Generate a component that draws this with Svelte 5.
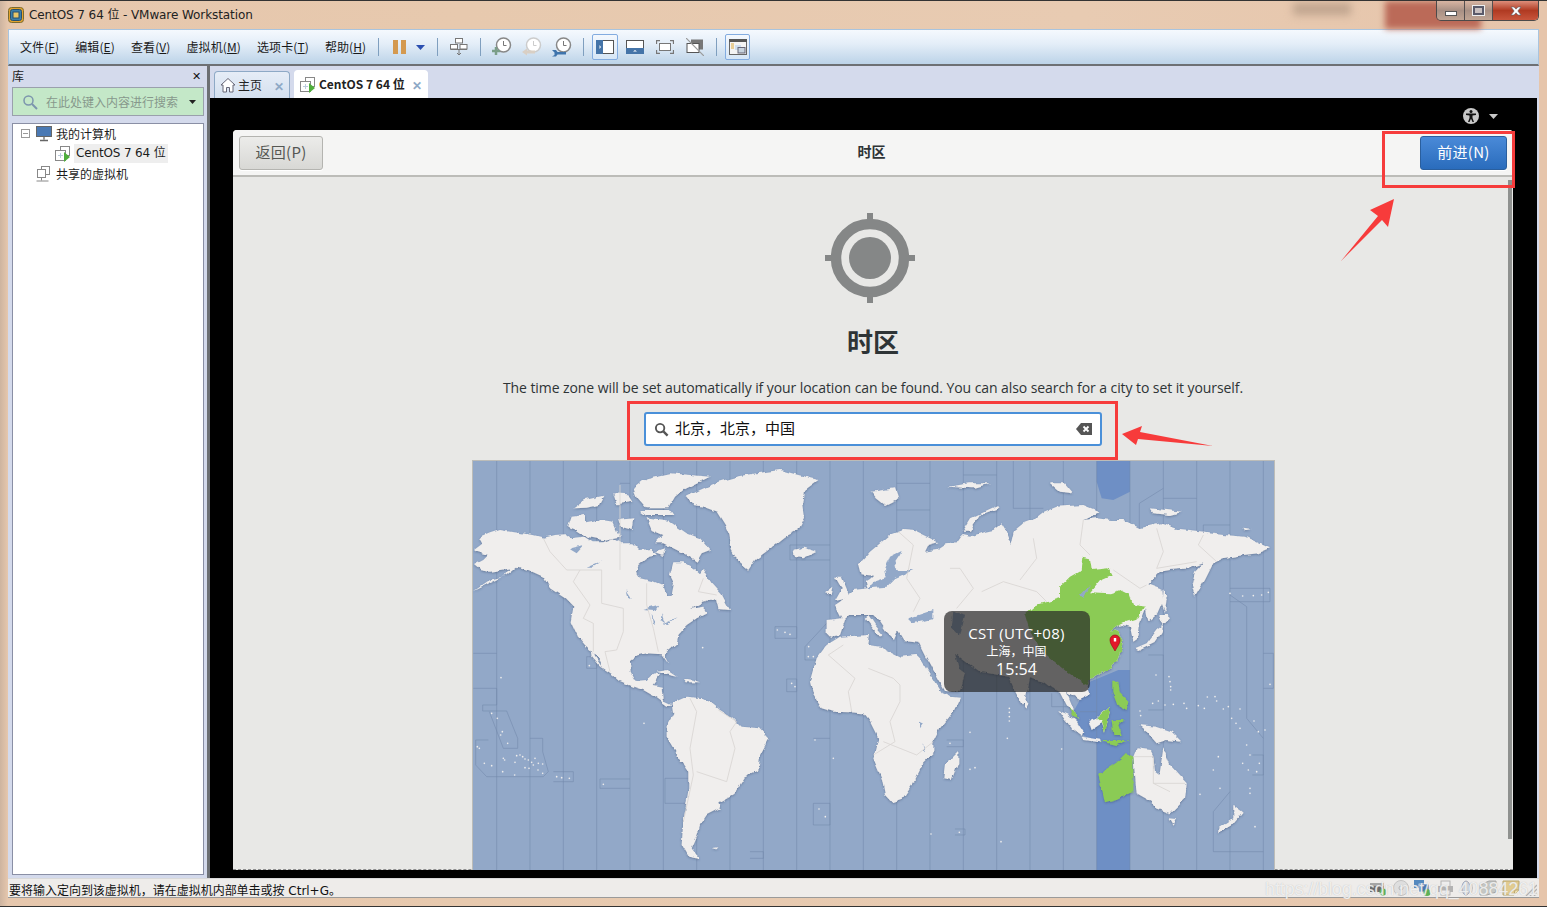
<script>
	const menus = [
		['文件(', 'F', ')'], ['编辑(', 'E', ')'], ['查看(', 'V', ')'],
		['虚拟机(', 'M', ')'], ['选项卡(', 'T', ')'], ['帮助(', 'H', ')']
	];

	const verticals = [80, 180, 280, 380, 480, 580, 680, 780, 880, 980, 1080, 1180];

	const westZones = [
		'10,595 80,595', '10,700 80,700 80,750 38,750 38,768 110,768 143,850 143,880 100,880 58,770',
		'180,850 218,850 218,890 235,950 220,965 50,965 17,930 17,855 55,855', '250,950 310,950 310,980 250,980',
		'390,972 480,972', '390,972 390,1000 480,1000', '585,970 660,970', '585,970 585,1045 650,1045',
		'915,515 980,515 980,550 915,550 915,515', '1005,575 1070,505', '1005,575 1005,615 1040,615',
		'950,672 980,672 980,710 950,710 950,672', '1030,850 1080,850', '1030,1045 1080,1045 1080,1110 1030,1110 1030,1045',
		'840,1190 880,1190 880,1210 840,1210', '960,270 1080,270', '960,270 960,315 1080,315',
		'450,85 480,85', '350,605 380,605 380,640 350,640 350,605'
	];
	const eastZones = [
		'80,85 180,85', '280,60 380,60', '430,18 430,160 520,160', '880,100 808,145 808,230',
		'980,130 880,130', '1080,210 1000,210 1000,260', '1080,400 1200,400 1200,440 1080,440', '1080,420 1130,455 1130,790 1180,850',
		'1030,1070 1080,1010', '1030,1070 1030,1190 1180,1190', '835,600 880,600 880,765 835,765', '1180,595 1210,595 1210,700 1180,700',
		'80,165 180,165', '230,855 280,855 280,875 230,875', '255,1122 285,1122 285,1140 255,1140',
		'545,715 545,755 590,755', '630,770 680,770', '1147,900 1180,900 1180,960 1147,960'
	];

	const westBorders = [
		'220,250 240,290 290,345 330,345 310,380 360,450 340,490 370,505 370,590',
		'330,345 395,345 395,445 460,460 460,530 440,585 405,590 420,650',
		'450,90 450,345', '530,385 530,450 550,520 565,590', '700,370 685,410 740,420', '660,730 680,770 660,880 670,960 640,1100',
		'745,765 800,800 780,830 795,880 770,980 680,950', '1120,570 1075,600 1155,670 1135,710 1145,770'
	];
	const eastBorders = [
		'85,230 130,270 110,370 150,430 130,470', '240,340 270,340 310,400 260,460', '335,410 400,380 500,410 530,440',
		'490,250 500,310 450,375', '640,195 630,270 660,300', '730,345 810,400 830,390', '860,220 880,290 860,340 980,320',
		'-5,640 70,670 90,690 90,740 60,800 75,860 10,900', '40,860 140,900 190,860', '790,905 850,905 850,985 900,1010',
		'850,985 945,985', '1000,240 985,270 1040,320'
	];

	const westDots = [
		[65,775],[82,790],[97,830],[92,840],[113,865],[22,875],[28,880],[100,910],[104,915],[43,925],[65,932],[98,950],[134,960],
		[140,902],[150,900],[158,905],[165,912],[175,915],[185,922],[195,910],[205,925],[218,927],[135,922],[165,938],[177,940],
		[190,930],[204,945],[218,955],[260,965],[275,968],[298,970],[400,988],[358,632],[698,578],[922,525],[945,532],[960,538],
		[1016,575],[1035,855],[1090,910],[1047,1062],[1066,1085],[93,668],[522,805],[1015,605],[1030,605],[965,685],[975,695]
	];
	const eastDots = [
		[300,832],[412,850],[575,882],[300,943],[315,938],[240,865],[183,1137],[268,1132],[393,1160],[1050,1000],[990,1018],[1155,1115],
		[418,760],[418,772],[418,785],[418,798],[858,660],[897,665],[900,680],[902,695],[902,705],[1200,688],
		[810,768],[812,782],[848,745],[865,738],[885,750],[910,748],[942,745],[950,760],[985,752],[1003,760],[1012,726],[1035,725],[1040,738],
		[1060,762],[1075,755],[1110,762],[1085,790],[1098,805],[1110,820],[1152,798],[1165,830],[1185,825],[1130,870],[1140,900],[1118,925],
		[1135,945],[1168,925],[1160,950],[1140,1015],[1140,1000],[1080,415],[1118,423],[1150,422],[1175,420],[1195,412],[1030,945],[1045,905]
	];
</script>

<div class="window">
	<div class="aero-blur"></div>
	<div class="aero-smudge"></div>
	<header class="titlebar">
		<svg class="app-icon" viewBox="0 0 16 16" width="16" height="16">
			<rect x="0.5" y="0.5" width="15" height="15" rx="3" fill="#e4a32c" stroke="#7a6a30"/>
			<rect x="2.5" y="2.5" width="11" height="11" rx="2" fill="#3d7fa8" stroke="#26506e"/>
			<rect x="5" y="5" width="6" height="6" fill="#e9c768" stroke="#26506e"/>
		</svg>
		<span class="title-text">CentOS 7 64 位 - VMware Workstation</span>
		<div class="win-controls">
			<div class="ctl"><span class="min-mark"></span></div>
			<div class="ctl"><span class="max-mark"></span></div>
			<div class="ctl close">
				<svg viewBox="0 0 12 10" width="12" height="10"><path d="M1 1h3l2 2.2L8 1h3L7.8 5 11 9H8L6 6.8 4 9H1l3.2-4z" fill="#fff" stroke="#5a5f68" stroke-width=".6"/></svg>
			</div>
		</div>
	</header>

	<nav class="toolbar">
		{#each menus as m}
			<span class="menu">{m[0]}<u>{m[1]}</u>{m[2]}</span>
		{/each}
		<i class="sep first"></i>
		<div class="pause"><b></b><b></b></div>
		<svg class="drop" viewBox="0 0 9 5" width="9" height="5"><path d="M0 0h9L4.5 5z" fill="#2b4fb0"/></svg>
		<i class="sep drop-sep"></i>
		<div class="tool">
			<svg viewBox="0 0 20 20" width="20" height="20" fill="#fff" stroke="#777">
				<rect x="6.5" y="1.5" width="7" height="4.5"/><rect x="1.5" y="7.5" width="7" height="4.5"/><rect x="11" y="7.5" width="7" height="4.5"/>
				<path d="M1.5 12.500h16.500" fill="none"/><path d="M10 13v5M8 16l2 2 2-2" fill="none"/>
			</svg>
		</div>
		<i class="sep"></i>
		<div class="tool">
			<svg viewBox="0 0 22 22" width="22" height="22">
				<circle cx="12.500" cy="9" r="7" fill="#fff" stroke="#888" stroke-width="1.500"/><path d="M12.500 5v4.500h3" fill="none" stroke="#777"/>
				<path d="M5 11v8M1 15h8" stroke="#7a9e88" stroke-width="2.500"/>
			</svg>
		</div>
		<div class="tool">
			<svg viewBox="0 0 22 22" width="22" height="22">
				<circle cx="12.500" cy="9" r="7" fill="#fff" stroke="#ccc" stroke-width="1.500"/><path d="M12.500 5v4.500h3" fill="none" stroke="#ccc"/>
				<path d="M1 16l5-3.500v2h8v3H6v2z" fill="#d9cfc4"/>
			</svg>
		</div>
		<div class="tool">
			<svg viewBox="0 0 22 22" width="22" height="22">
				<circle cx="12.500" cy="9" r="7" fill="#fff" stroke="#888" stroke-width="1.500"/><path d="M12.500 5v4.500h3" fill="none" stroke="#777"/>
				<path d="M1 14h4l1.500 2H15v2.500H6.500L5 20.500H1l2.500-1.500v-2.500z" fill="#3f74ac"/>
			</svg>
		</div>
		<i class="sep"></i>
		<div class="tool on">
			<svg viewBox="0 0 18 14" width="18" height="14"><rect x=".5" y=".5" width="17" height="13" fill="#fff" stroke="#555"/><rect x="0" y="0" width="7" height="14" fill="#4574a8"/><path d="M3.500 5l1.500 2-1.500 2z" fill="#fff"/></svg>
		</div>
		<div class="tool">
			<svg viewBox="0 0 18 14" width="18" height="14"><rect x=".5" y=".5" width="17" height="13" fill="#fff" stroke="#555"/><rect x="0" y="8" width="18" height="6" fill="#4574a8"/><path d="M7 11.500l2-1.500 2 1.500z" fill="#fff"/></svg>
		</div>
		<div class="tool">
			<svg viewBox="0 0 18 14" width="18" height="14" fill="none" stroke="#777"><rect x="3.500" y="3.500" width="11" height="7" fill="#fff"/><path d="M.5 4V.5H4M14 .5h3.500V4M17.500 10v3.500H14M4 13.500H.5V10" stroke-width="1.300"/></svg>
		</div>
		<div class="tool">
			<svg viewBox="0 0 18 18" width="18" height="18"><rect x="5" y="1.500" width="12" height="10" fill="#777"/><rect x="1" y="5.500" width="12" height="9" fill="#fff" stroke="#555"/><path d="M0 0l18 18" stroke="#999" stroke-width="1.200"/></svg>
		</div>
		<i class="sep"></i>
		<div class="tool on narrow">
			<svg viewBox="0 0 18 16" width="18" height="16"><rect x=".5" y=".5" width="17" height="15" fill="#f4f4f4" stroke="#666"/><rect x="0" y="0" width="18" height="3" fill="#555"/><path d="M2 5h3M2 7h3M2 9h3" stroke="#dca93a"/><rect x="6" y="6" width="6" height="5" fill="#cfdff0"/><rect x="9" y="8.500" width="7" height="5.500" fill="#c8d4df" stroke="#667"/></svg>
		</div>
	</nav>

	<div class="main">
		<aside class="library">
			<div class="lib-head"><span>库</span><span class="lib-x">✕</span></div>
			<div class="lib-search">
				<svg viewBox="0 0 16 16" width="16" height="16" fill="none" stroke="#7c95ad"><circle cx="6.500" cy="6.500" r="4.500" stroke-width="1.500"/><path d="M10 10l5 5" stroke-width="2"/></svg>
				<span class="lib-hint">在此处键入内容进行搜索</span>
				<svg class="lib-arrow" viewBox="0 0 7 4" width="7" height="4"><path d="M0 0h7L3.500 4z" fill="#222"/></svg>
			</div>
			<div class="tree">
				<div class="tree-row">
					<span class="expander"></span>
					<svg viewBox="0 0 16 16" width="16" height="16"><rect x=".5" y=".5" width="15" height="10" fill="#4a79b4" stroke="#666"/><path d="M8 11v2.500M4 14.500h8" stroke="#666" stroke-width="1.300"/></svg>
					<span>我的计算机</span>
				</div>
				<div class="tree-row vm">
					<svg viewBox="0 0 16 16" width="16" height="16"><rect x="5.500" y=".5" width="9" height="9" fill="#fff" stroke="#888"/><rect x=".5" y="4.500" width="10" height="10" fill="#fff" stroke="#888"/><path d="M5.500 7v5M3 9.500h5" stroke="#bcd"/><path d="M9 6l6 5-6 5z" fill="#4fae3c"/></svg>
					<span class="vm-name">CentOS 7 64 位</span>
				</div>
				<div class="tree-row shared">
					<svg viewBox="0 0 16 16" width="16" height="16" fill="#fff" stroke="#888"><rect x="5.500" y=".5" width="8" height="8"/><rect x="1.500" y="3.500" width="8" height="8"/><path d="M5.500 11.500v3M.5 15h12" fill="none"/></svg>
					<span>共享的虚拟机</span>
				</div>
			</div>
		</aside>

		<section class="right">
			<div class="tabs">
				<div class="tab">
					<svg viewBox="0 0 16 16" width="16" height="16" fill="#fff" stroke="#667"><path d="M1 8l7-6.500L15 8h-2v7H9.500v-4.500h-3V15H3V8z"/></svg>
					<span class="tab-label">主页</span>
					<span class="tab-x">✕</span>
				</div>
				<div class="tab active">
					<svg viewBox="0 0 16 16" width="16" height="16"><rect x="5.500" y=".5" width="9" height="9" fill="#fff" stroke="#888"/><rect x=".5" y="4.500" width="10" height="10" fill="#fff" stroke="#888"/><path d="M5.500 7v5M3 9.500h5" stroke="#bcd"/><path d="M9 6l6 5-6 5z" fill="#4fae3c"/></svg>
					<span class="tab-label">CentOS 7 64 位</span>
					<span class="tab-x">✕</span>
				</div>
			</div>

			<div class="console">
				<div class="a11y">
					<svg viewBox="0 0 16 16" width="16" height="16"><circle cx="8" cy="8" r="8" fill="#c8c8c8"/><circle cx="8" cy="3.600" r="1.500" fill="#111"/><path d="M3 5.500h10v1.400l-3.500.6v2.500l1.500 4h-1.500L8 10.800 6.500 14H5l1.500-4V7.500L3 6.900z" fill="#111"/></svg>
					<svg class="a11y-arrow" viewBox="0 0 9 5" width="9" height="5"><path d="M0 0h9L4.500 5z" fill="#c8c8c8"/></svg>
				</div>
				<div class="installer">
					<div class="inst-head">
						<button class="btn">返回(P)</button>
						<h2>时区</h2>
						<button class="btn primary">前进(N)</button>
					</div>
					<div class="inst-body">
						<svg class="target" viewBox="0 0 90 90" width="90" height="90">
							<circle cx="45" cy="45" r="34" fill="none" stroke="#858787" stroke-width="10.500"/>
							<circle cx="45" cy="45" r="21" fill="#858787"/>
							<path d="M45 0v10M45 80v10M0 45h10M80 45h10" stroke="#858787" stroke-width="6"/>
						</svg>
						<h1>时区</h1>
						<p class="desc">The time zone will be set automatically if your location can be found. You can also search for a city to set it yourself.</p>
						<div class="entry">
							<svg viewBox="0 0 16 16" width="15" height="15" fill="none" stroke="#555"><circle cx="6.500" cy="6.500" r="4.500" stroke-width="2"/><path d="M10 10l4.500 4.500" stroke-width="2.500"/></svg>
							<span class="entry-text">北京，北京，中国</span>
							<svg class="entry-clear" viewBox="0 0 16 12" width="16" height="12"><path d="M5 0h11v12H5L0 6z" fill="#555"/><path d="M7.500 3.500l5 5M12.500 3.500l-5 5" stroke="#fff" stroke-width="1.800"/></svg>
						</div>
						<div class="map">
							<svg viewBox="473 461 801 409" width="801" height="409">
								<defs>
									<filter id="coast" x="-2%" y="-2%" width="104%" height="104%">
										<feTurbulence type="fractalNoise" baseFrequency=".11" numOctaves="3" seed="4" result="noise"/>
										<feDisplacementMap in="SourceGraphic" in2="noise" scale="5" xChannelSelector="R" yChannelSelector="G" result="rough"/>
										<feDropShadow in="rough" dx="0" dy="1" stdDeviation="1.300" flood-color="#324669" flood-opacity=".45"/>
									</filter>
								</defs>
								<rect x="473" y="461" width="801" height="409" fill="#92a8c8"/>

								<g transform="translate(870 455) scale(.33333)">
									<path d="M680 18h100v92l-50 25-35-5-15-50z" fill="#6e8fc5"/>
									<path d="M660 680l85-35h35v600H680V865l-40-25-30-70z" fill="#6e8fc5"/>
								</g>

								<g fill="none" stroke="#7287aa" stroke-opacity=".55" stroke-width="3">
									<g transform="translate(470 455) scale(.33333)">
										{#each verticals as x}
											<path d="M{x} 18V1245"/>
										{/each}
										{#each westZones as pts}
											<polyline points={pts}/>
										{/each}
									</g>
									<g transform="translate(870 455) scale(.33333)">
										{#each verticals as x}
											<path d="M{x} 18V1245"/>
										{/each}
										{#each eastZones as pts}
											<polyline points={pts}/>
										{/each}
									</g>
								</g>

								<g filter="url(#coast)">
									<g fill="#f0eeed" transform="translate(470 455) scale(.33333)">
										<!-- north america -->
										<path d="M12 285L35 268 25 250 60 235 90 225 130 232 190 240 222 248 255 240 285 238 300 250 340 245 365 262 400 262 430 250 455 265 490 265 510 285 545 282 560 300 535 305 505 330 498 350 510 370 545 378 580 393 590 420 605 420 612 385 600 360 610 322 640 322 670 340 690 358 700 345 725 385 755 418 780 465 745 462 738 430 700 440 660 462 700 455 710 475 680 490 650 510 625 540 620 565 590 590 585 605 596 628 575 598 530 595 500 602 480 618 482 650 497 678 530 675 545 660 555 655 570 660 548 690 575 695 578 735 605 748 592 752 555 725 520 705 490 695 450 678 430 660 400 640 385 610 362 585 345 570 320 540 302 500 310 455 285 430 240 400 220 365 175 345 140 335 110 360 60 385 12 408 60 375 100 365 120 340 60 350 30 345 12 330 40 315 55 300 20 290z"/>
										<path d="M362 585L378 610 402 645 385 630 365 605z"/>
										<!-- greenland, iceland -->
										<path d="M650 125L690 105 745 80 800 65 860 55 930 45 985 60 1045 75 1005 105 1000 150 1005 185 985 225 945 245 895 285 855 315 835 345 805 320 785 285 778 240 765 210 740 170 700 155 670 150z"/>
										<path d="M970 285L1000 278 1040 290 1000 310 975 305z"/>
										<!-- south america -->
										<path d="M605 745L650 725 700 730 725 745 750 765 790 790 815 815 870 820 897 850 870 900 865 945 825 965 790 1020 745 1045 750 1060 710 1080 690 1110 680 1145 665 1180 690 1212 655 1205 635 1170 640 1100 655 1010 655 950 625 905 590 845 590 815 610 780z"/>
										<!-- arctic islands -->
										<path d="M530 190L560 195 600 200 650 235 690 250 720 285 695 295 680 320 650 300 610 280 580 265 555 265 580 240 545 225z"/>
										<path d="M490 100L530 70 600 55 720 65 680 85 640 105 615 125 595 160 530 160 500 125z"/>
										<path d="M295 215L305 185 345 180 345 205 395 195 430 200 450 245 400 255 350 245 320 225z"/>
										<path d="M310 160L345 135 400 122 385 150 350 158z"/>
										<path d="M430 115L475 118 490 140 440 148z"/>
										<path d="M510 165L600 165 610 180 530 180z"/>
										<path d="M445 195L490 190 485 225 450 215z"/>
										<path d="M555 290L585 280 580 300z"/>
										<!-- caribbean -->
										<path d="M560 650L590 645 620 665 595 660zM640 670L670 675 690 682 650 682z"/>
										<!-- britain -->
										<path d="M1065 415L1090 395 1085 420zM1095 365L1115 365 1140 425 1095 435 1115 400z"/>
										<path d="M728 1182L745 1180 740 1186z"/>
									</g>
									<g fill="#f0eeed" transform="translate(870 455) scale(.33333)">
										<!-- eurasia -->
										<path d="M-130 495L-85 490 -105 450 -90 440 -50 405 -5 400 -10 378 0 372 10 362 -28 358 -35 330 0 290 60 240 100 225 135 228 205 262 175 270 165 290 200 285 230 265 260 262 275 240 300 245 340 232 370 225 395 205 410 230 425 270 435 225 460 205 500 190 525 170 560 155 640 150 690 170 640 195 680 190 720 195 760 195 810 220 870 205 930 225 990 232 1060 240 1125 245 1200 280 1165 295 1120 300 1060 310 1030 325 1005 375 975 425 965 390 975 350 1000 325 960 340 900 345 870 350 835 385 875 400 880 440 865 475 835 500 828 460 810 505 805 550 790 560 780 515 760 510 740 515 720 530 745 525 755 560 748 600 725 640 680 660 655 675 650 695 660 720 630 735 590 710 610 760 625 795 590 750 570 710 545 700 520 680 480 670 465 740 455 745 430 700 415 665 330 650 295 625 255 595 265 640 285 655 270 710 225 708 165 600 145 560 100 555 85 530 75 555 50 530 30 500 10 480 -5 480 -30 480 -60 480 -75 495 -90 540 -120 545 -130 535z"/>
										<path d="M-5 480L15 510 40 540 30 545 5 515 -15 490z"/>
										<!-- africa -->
										<path d="M-180 680L-160 610 -130 570 -90 545 0 540 -5 570 30 575 90 605 140 600 150 610 215 715 240 725 270 728 250 770 210 820 190 860 190 895 160 925 130 985 100 1030 65 1042 45 1020 35 970 10 910 25 850 0 800 -20 775 -60 772 -110 770 -145 760 -170 720z"/>
										<!-- oceania -->
										<path d="M790 905L800 880 840 885 850 905 855 950 868 960 880 880 900 930 950 985 945 1030 900 1075 860 1060 845 1040 800 1015z"/>
										<path d="M895 1090L918 1092 908 1112z"/>
										<path d="M1090 1050L1118 1070 1085 1110 1045 1135 1045 1120 1090 1090z"/>
										<path d="M805 810L860 815 905 830 935 860 890 855 860 865 830 830z"/>
										<!-- japan, sakhalin, madagascar -->
										<path d="M795 580L830 565 860 525 880 510 868 480 890 480 900 490 880 510 875 530 855 560 805 585z"/>
										<path d="M878 400L890 430 885 475 876 450z"/>
										<path d="M220 970L225 930 265 890 265 920 245 975z"/>
										<path d="M462 735L475 745 468 762 462 755z"/>
										<!-- indonesia -->
										<path d="M565 765L590 775 620 800 640 830 635 842 610 825 585 795z"/>
										<path d="M635 845L695 855 690 862 640 855z"/>
										<path d="M655 795L680 790 720 755 720 770 705 830 695 805 665 825z"/>
										<!-- arctic -->
										<path d="M5 110L75 100 85 130 45 150 20 130z"/>
										<path d="M275 230L300 190 385 150 388 158 330 180 300 230z"/>
										<path d="M235 95L300 85 360 85 310 100zM540 85L585 85 610 115 570 110zM840 160L935 170 900 180 850 175z"/>
										<path d="M1120 218L1145 222 1125 226z"/>
										<!-- china and neighbours in the selected zone -->
										<path d="M640 305L660 310 665 345 715 340 725 360 690 375 660 412 720 415 750 405 780 420 790 450 825 455 805 490 770 500 740 515 720 530 745 525 755 560 748 600 725 640 680 660 655 675 650 690 590 650 530 600 480 530 465 480 500 450 570 430 570 395 600 365 635 345z" fill="#8bcb54"/>
										<path d="M730 680L745 680 750 715 775 740 770 765 745 750 730 710zM598 760L615 768 625 795 610 785zM682 790L720 755 720 770 705 830 695 800zM725 795L765 795 745 810 755 840 730 840zM690 858L780 858 740 870z" fill="#8bcb54"/>
										<path d="M690 955L750 915 770 895 790 905 790 1015 770 1020 740 1035 705 1045 695 1000 685 960z" fill="#8bcb54"/>
									</g>
									<g fill="#92a8c8" transform="translate(470 455) scale(.33333)">
										<path d="M300 280L340 270 320 292zM350 335L400 315 365 335zM470 405L488 432 476 430zM520 465L565 452 555 468zM545 475L555 510 548 505zM575 478L585 505 572 495zM578 508L620 490 590 510z"/>
									</g>
									<g fill="#92a8c8" transform="translate(870 455) scale(.33333)">
										<path d="M115 490L190 465 190 490 130 505zM250 470L285 480 270 545 245 520z"/>
										<path d="M95 288L60 305 45 345 50 370 5 385 -5 400 50 395 75 370 130 345 85 345 70 330 90 300z"/>
										<path d="M150 800L160 805 150 820zM158 860L165 895 160 890z"/>
										<path d="M630 422L660 390 642 425z"/>
									</g>
								</g>

								<g fill="none" stroke="#d8d5d3" stroke-width="2.500">
									<g transform="translate(470 455) scale(.33333)">
										{#each westBorders as pts}
											<polyline points={pts}/>
										{/each}
									</g>
									<g transform="translate(870 455) scale(.33333)">
										{#each eastBorders as pts}
											<polyline points={pts}/>
										{/each}
									</g>
								</g>

								<g fill="#f0eeed">
									<g transform="translate(470 455) scale(.33333)">
										{#each westDots as d}
											<circle cx={d[0]} cy={d[1]} r="2.500"/>
										{/each}
									</g>
									<g transform="translate(870 455) scale(.33333)">
										{#each eastDots as d}
											<circle cx={d[0]} cy={d[1]} r="2.500"/>
										{/each}
									</g>
								</g>

								<g transform="translate(1115 643)">
									<path d="M0 8C-2 4-5 1-5-3a5 5 0 0 1 10 0C5 1 2 4 0 8z" fill="#e3182a" stroke="#9e1018" stroke-width=".7"/>
									<rect x="-1.200" y="-5" width="2.400" height="3.500" fill="#fff"/>
								</g>
							</svg>
							<div class="tip">
								<div class="tip-zone">CST (UTC+08)</div>
								<div class="tip-city">上海，中国</div>
								<div class="tip-time">15:54</div>
							</div>
						</div>
						<div class="scrollbar"></div>
					</div>
				</div>
			</div>
		</section>
	</div>

	<footer class="status">
		<span class="status-text">要将输入定向到该虚拟机，请在虚拟机内部单击或按 Ctrl+G。</span>
		<div class="status-icons">
			<svg viewBox="0 0 18 16" width="18" height="16"><rect x="0" y="3" width="14" height="9" fill="#555"/><rect x="0" y="3" width="14" height="3" fill="#999"/><circle cx="13" cy="12" r="3.500" fill="#45a83a"/></svg>
			<svg viewBox="0 0 16 16" width="16" height="16"><circle cx="8" cy="8" r="7.500" fill="#dcdcdc" stroke="#bbb"/><circle cx="8" cy="8" r="2" fill="#f4f4f4" stroke="#aaa"/></svg>
			<svg viewBox="0 0 18 16" width="18" height="16"><rect x="0" y="0" width="10" height="8" fill="#3a78b8"/><rect x="5" y="4" width="10" height="8" fill="#2a62a8" stroke="#fff" stroke-width=".7"/><circle cx="13" cy="12.500" r="3.500" fill="#45a83a"/></svg>
			<svg viewBox="0 0 18 16" width="18" height="16"><rect x="4" y="1" width="9" height="6" fill="#eee" stroke="#aaa"/><rect x="1" y="6" width="15" height="6" fill="#aaa"/><rect x="4" y="10" width="9" height="5" fill="#eee" stroke="#aaa"/></svg>
			<svg viewBox="0 0 14 16" width="14" height="16"><ellipse cx="6" cy="8" rx="4" ry="7" fill="#c9d2dc" stroke="#99a"/><path d="M11 3c2 3 2 7 0 10" fill="none" stroke="#bbb"/></svg>
			<svg viewBox="0 0 18 16" width="18" height="16"><path d="M1 5l9-4h7v11l-9 3H1z" fill="#bfc1bd" stroke="#999"/></svg>
			<svg viewBox="0 0 18 16" width="18" height="16"><path d="M1 1h16v9l-5 5H1z" fill="#e0c780" stroke="#b09a58"/><path d="M12 15l1-5 4 0" fill="#f3e3ac" stroke="#b09a58"/></svg>
			<svg class="grip" viewBox="0 0 12 12" width="12" height="12"><path d="M12 1L1 12M12 5l-7 7M12 9l-3 3" stroke="#a9a9a9" stroke-width="1.300"/></svg>
		</div>
		<span class="watermark">https://blog.csdn.net/qq_40884261</span>
	</footer>

	<div class="mark mark-next"></div>
	<div class="mark mark-entry"></div>
	<svg class="arrows" viewBox="0 0 1547 907" width="1547" height="907">
		<path d="M1341 260L1378 215 1370 209 1394 198 1388 226 1382 219z" fill="#f73b3b"/>
		<path d="M1122 433L1142 425 1140 431 1213 445 1138 438 1136 444z" fill="#f73b3b"/>
	</svg>
</div>

<style>
	:global(body) {
		margin: 0;
		background: #e7c9ae;
	}
	.window {
		position: relative;
		width: 1547px;
		height: 907px;
		box-sizing: border-box;
		padding: 0 8px 8px;
		display: flex;
		flex-direction: column;
		overflow: hidden;
		font-family: "Noto Sans CJK SC", "Noto Sans", sans-serif;
		font-size: 12px;
		color: #1c1c1c;
		background: linear-gradient(90deg, #cdb4a0 0, #e6c7ad 8px, #e7c9ae 30%, #e8cbb2 70%, #e6c5ab 100%);
		border-top: 1px solid #333;
		border-bottom: 1px solid #333;
	}
	.aero-blur {
		position: absolute;
		left: 1385px;
		top: 0;
		width: 96px;
		height: 28px;
		background: #bb6a58;
		filter: blur(3px);
	}
	.aero-smudge {
		position: absolute;
		left: 1293px;
		top: 2px;
		width: 58px;
		height: 12px;
		background: #bfa48e;
		filter: blur(4px);
	}
	.titlebar {
		position: relative;
		height: 28px;
		display: flex;
		align-items: center;
		flex: none;
	}
	.app-icon {
		flex: none;
		margin-top: -1px;
	}
	.title-text {
		margin-left: 5px;
		margin-top: -3px;
		font-family: "DejaVu Sans", "Noto Sans CJK SC", sans-serif;
		font-size: 12px;
		letter-spacing: -.09px;
		color: #222;
		white-space: nowrap;
	}
	.win-controls {
		margin-left: auto;
		align-self: flex-start;
		display: flex;
		height: 19px;
		border: 1px solid #4c4a4a;
		border-top: 0;
		border-radius: 0 0 5px 5px;
		overflow: hidden;
	}
	.ctl {
		width: 27px;
		display: flex;
		align-items: center;
		justify-content: center;
		background: linear-gradient(#d9b5a2, #a89084 50%, #c0a594);
		border-right: 1px solid #554f4f;
	}
	.ctl.close {
		width: 45px;
		border-right: 0;
		background: linear-gradient(#dd8e7a, #b03a22 50%, #c8553c);
	}
	.min-mark {
		width: 10px;
		height: 3px;
		margin-top: 6px;
		background: #fff;
		border: 1px solid #555;
	}
	.max-mark {
		width: 7px;
		height: 5px;
		border: 2px solid #5a5a6a;
		outline: 1px solid #eee;
		background: #c9c0c0;
	}
	.toolbar {
		height: 37px;
		flex: none;
		box-sizing: border-box;
		display: flex;
		align-items: center;
		padding: 0 0 0 11px;
		border: 1px solid #a9c4de;
		border-bottom: 2px solid #6d7074;
		background: linear-gradient(#f5f9fe, #e4eef8 40%, #bcd3e8);
	}
	.menu {
		margin-right: 16px;
		padding-bottom: 2px;
		white-space: nowrap;
		color: #1a1a1a;
		letter-spacing: .1px;
	}
	.sep {
		display: block;
		width: 1px;
		height: 18px;
		background: #7f9fbf;
	}
	.sep.first {
		margin-left: -4px;
		margin-right: 14px;
	}
	.sep.drop-sep {
		margin: 0 6px 0 12px;
	}
	.pause {
		display: flex;
		gap: 3px;
		height: 14px;
	}
	.pause b {
		display: block;
		width: 5px;
		background: #d4994f;
	}
	.drop {
		margin-left: 10px;
	}
	.tool {
		width: 30px;
		height: 26px;
		flex: none;
		display: flex;
		align-items: center;
		justify-content: center;
	}
	.tool + .sep {
		margin: 0 6px;
	}
	.tool.on {
		box-sizing: border-box;
		width: 26px;
		margin: 0 2px;
		background: linear-gradient(#f4f8fd, #d6e6f6);
		border: 1px solid #83ace0;
		border-radius: 2px;
	}
	.tool.narrow {
		width: 25px;
	}
	.main {
		flex: 1;
		min-height: 0;
		display: flex;
		background: #f2f0ee;
	}
	.library {
		width: 199px;
		flex: none;
		box-sizing: border-box;
		display: flex;
		flex-direction: column;
		padding: 0 3px 3px 4px;
		background: #d4daec;
	}
	.lib-head {
		height: 21px;
		box-sizing: border-box;
		display: flex;
		align-items: center;
		justify-content: space-between;
		padding: 0 3px 3px 0;
		color: #222;
	}
	.lib-x {
		font-size: 11px;
		color: #111;
	}
	.lib-search {
		height: 29px;
		box-sizing: border-box;
		flex: none;
		display: flex;
		align-items: center;
		padding: 0 7px 0 9px;
		background: #c4e8c8;
		border: 1px solid #9aa0ac;
	}
	.lib-hint {
		margin-left: 8px;
		padding-bottom: 1px;
		color: #87988c;
	}
	.lib-arrow {
		margin-left: auto;
	}
	.tree {
		margin-top: 7px;
		flex: 1;
		background: #fff;
		border: 1px solid #8a8fa5;
	}
	.tree-row {
		height: 20px;
		box-sizing: border-box;
		display: flex;
		align-items: center;
		gap: 4px;
		padding-left: 8px;
		padding-bottom: 1px;
	}
	.expander {
		box-sizing: border-box;
		width: 9px;
		height: 9px;
		margin-right: 2px;
		border: 1px solid #999;
		background: linear-gradient(#999, #999) center / 5px 1px no-repeat;
	}
	.tree-row.vm {
		padding-left: 42px;
		gap: 3px;
	}
	.vm-name {
		font-family: "DejaVu Sans", "Noto Sans CJK SC", sans-serif;
		letter-spacing: -.15px;
		background: #eeeeee;
		padding: 0 2px;
		line-height: 19px;
	}
	.tree-row.shared {
		padding-left: 23px;
	}
	.right {
		flex: 1;
		min-width: 0;
		display: flex;
		flex-direction: column;
		background: #d4daec;
	}
	.tabs {
		height: 32px;
		flex: none;
		display: flex;
		align-items: flex-end;
		gap: 4px;
		padding-left: 4px;
		border-left: 3px solid #6c6f73;
	}
	.tab {
		width: 76px;
		height: 27px;
		box-sizing: border-box;
		display: flex;
		align-items: center;
		gap: 2px;
		padding: 0 5px;
		background: linear-gradient(#e6edf7, #d4e0ef);
		border: 1px solid #8ea9c6;
		border-bottom: 0;
		border-radius: 4px 4px 0 0;
		color: #222;
	}
	.tab-label {
		padding-bottom: 2px;
	}
	.tab.active {
		width: 134px;
		height: 28px;
		background: #fff;
		font-weight: 700;
		font-size: 12px;
		border-color: #fff;
		gap: 3px;
	}
	.tab-x {
		margin-left: auto;
		font-size: 12px;
		font-weight: 700;
		color: #8ea9c6;
	}
	.console {
		flex: 1;
		min-height: 0;
		box-sizing: border-box;
		display: flex;
		flex-direction: column;
		background: #000;
		padding: 0 24px 8px 23px;
		border-left: 0;
		margin: 0 2px 0 3px;
		box-shadow: -3px 0 0 #6c6f73;
	}
	.a11y {
		height: 32px;
		flex: none;
		display: flex;
		align-items: center;
		justify-content: flex-end;
		gap: 10px;
		padding-right: 15px;
		margin-top: 2px;
		margin-bottom: -2px;
	}
	.installer {
		flex: 1;
		min-height: 0;
		display: flex;
		flex-direction: column;
		border-radius: 4px 4px 0 0;
		overflow: hidden;
		background: #e8e8e6;
		font-family: "Open Sans", "Noto Sans CJK SC", sans-serif;
	}
	.inst-head {
		height: 47px;
		flex: none;
		box-sizing: border-box;
		display: flex;
		align-items: center;
		justify-content: space-between;
		padding: 0 6px;
		background: #f5f5f4;
		border-bottom: 2px solid #bcbcb8;
	}
	.inst-head h2 {
		margin: 0 0 3px;
		font-family: "Noto Sans CJK SC", sans-serif;
		font-size: 14px;
		font-weight: 700;
		color: #2e3436;
	}
	.btn {
		width: 84px;
		height: 34px;
		padding: 0 0 3px;
		font-family: "Noto Sans CJK SC", sans-serif;
		font-size: 15px;
		letter-spacing: .3px;
		color: #555753;
		background: linear-gradient(#ececea, #d8d8d5);
		border: 1px solid #b4b4b0;
		border-radius: 3px;
		box-shadow: 0 1px 0 #fff;
	}
	.btn.primary {
		width: 87px;
		color: #fff;
		background: linear-gradient(#4a8ad8, #2a6cbc);
		border-color: #2a5f9e;
	}
	.inst-body {
		position: relative;
		flex: 1;
		min-height: 0;
		display: flex;
		flex-direction: column;
		align-items: center;
		border-bottom: 1px dashed #8f8f8f;
	}
	.target {
		flex: none;
		margin: 36px 6px 0 0;
	}
	h1 {
		margin: 19px 0 0;
		font-family: "Noto Sans CJK SC", sans-serif;
		font-size: 26px;
		line-height: 38px;
		font-weight: 700;
		color: #2e3436;
	}
	.desc {
		margin: 18px 0 0;
		font-size: 14px;
		line-height: 20px;
		letter-spacing: -.08px;
		color: #2e3436;
		white-space: nowrap;
	}
	.entry {
		margin-top: 14px;
		width: 458px;
		height: 34px;
		flex: none;
		box-sizing: border-box;
		display: flex;
		align-items: center;
		gap: 6px;
		padding: 0 8px;
		background: #fff;
		border: 2px solid #4a90d9;
		border-radius: 3px;
	}
	.entry-text {
		padding-bottom: 4px;
		font-family: "Noto Sans CJK SC", sans-serif;
		font-size: 15px;
		color: #111;
	}
	.entry-clear {
		margin-left: auto;
	}
	.map {
		position: relative;
		margin-top: 15px;
		flex: none;
		line-height: 0;
		outline: 1px solid #bcbcb8;
	}
	.tip {
		position: absolute;
		left: 471px;
		top: 150px;
		width: 146px;
		height: 81px;
		box-sizing: border-box;
		padding-top: 12px;
		border-radius: 8px;
		background: rgba(38, 38, 38, .7);
		color: #fff;
		text-align: center;
		line-height: normal;
	}
	.tip-zone {
		font-size: 15px;
		letter-spacing: .3px;
		line-height: 20px;
	}
	.tip-city {
		font-family: "Noto Sans CJK SC", sans-serif;
		font-size: 12px;
		line-height: 16px;
	}
	.tip-time {
		font-size: 16px;
		line-height: 20px;
	}
	.scrollbar {
		position: absolute;
		right: 1px;
		top: 3px;
		bottom: 30px;
		width: 4px;
		background: #8f918f;
	}
	.status {
		position: relative;
		height: 20px;
		flex: none;
		box-sizing: border-box;
		display: flex;
		align-items: center;
		padding: 0 1px;
		background: #eeecea;
		border-top: 1px solid #d9d9d9;
		border-bottom: 1px solid #9a9a9a;
		color: #111;
	}
	.status-text {
		padding-top: 3px;
		font-family: "DejaVu Sans", "Noto Sans CJK SC", sans-serif;
		white-space: nowrap;
		letter-spacing: -.02px;
	}
	.status-icons {
		margin-left: auto;
		display: flex;
		align-items: center;
		gap: 5px;
		padding-right: 1px;
		opacity: .85;
	}
	.grip {
		align-self: flex-end;
	}
	.watermark {
		position: absolute;
		right: 1px;
		top: 0;
		font-family: "Liberation Sans", sans-serif;
		font-size: 18px;
		line-height: 20px;
		letter-spacing: -.1px;
		color: rgba(255, 255, 255, .75);
		text-shadow: 0 0 1px rgba(170, 170, 170, .8);
		white-space: nowrap;
	}
	.mark {
		position: absolute;
		box-sizing: border-box;
		border: 3px solid #f63c3c;
		pointer-events: none;
	}
	.mark-next {
		left: 1382px;
		top: 130px;
		width: 133px;
		height: 57px;
	}
	.mark-entry {
		left: 627px;
		top: 400px;
		width: 491px;
		height: 59px;
	}
	.arrows {
		position: absolute;
		left: 0;
		top: 0;
		pointer-events: none;
	}
</style>
